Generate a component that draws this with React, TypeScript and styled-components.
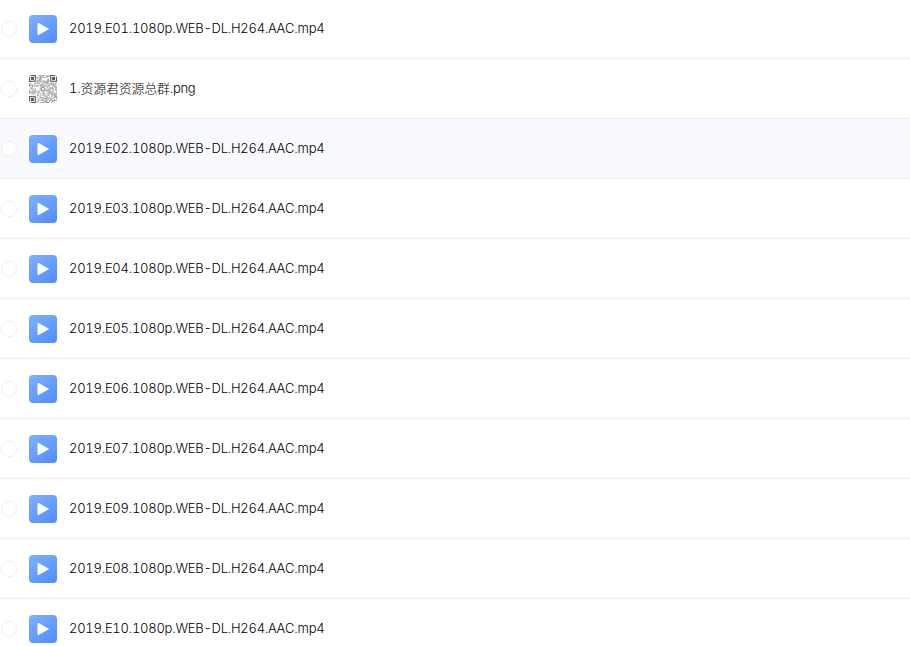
import React from "react";
import styled, { createGlobalStyle } from "styled-components";

const Global = createGlobalStyle`
  html, body { margin: 0; padding: 0; background: #fff; overflow: hidden; }
`;
const List = styled.ul`
  list-style: none; margin: -1px 0 0; padding: 0; width: 910px; height: 647px; overflow: hidden;
`;
const Row = styled.li<{ $active?: boolean }>`
  display: flex; align-items: center; box-sizing: border-box; height: 60px;
  border-bottom: 1px solid #eceef0;
  background: ${(p) => (p.$active ? "#f9faff" : "#fff")};
`;
const Radio = styled.span`
  box-sizing: border-box; width: 16px; height: 16px; margin-left: 1px; border-radius: 50%;
  border: 1px solid #eeeeee; background: #fff; flex: none;
`;
const Thumb = styled.span`
  display: flex; align-items: center; justify-content: center; flex: none;
  width: 28px; height: 28px; margin-left: 12px; border-radius: 4px; overflow: hidden;
`;
const VideoThumb = styled(Thumb)`
  background: linear-gradient(145deg, #7fb0ff 0%, #4f8dff 100%);
`;
const QrThumb = styled(Thumb)`
  filter: blur(0.25px);
`;
const Name = styled.span`
  margin-left: 12px; font: 300 13px/20px Inter, "Noto Sans CJK SC", sans-serif;
  font-kerning: none; font-variant-numeric: tabular-nums; letter-spacing: -0.25px; color: #000;
  position: relative; top: -0.5px;
`;

const Play = () => (
  <svg width="12" height="14" viewBox="0 0 12 14">
    <path d="M1 1.2 L11.4 7 L1 12.8 Z" fill="#fff" stroke="#fff" strokeWidth="1" strokeLinejoin="round" />
  </svg>
);

const QR = () => {
  const n = 29;
  const cells: React.ReactNode[] = [];
  const finder = (x: number, y: number) =>
    x >= 0 && y >= 0 && x < 7 && y < 7 && (x === 0 || y === 0 || x === 6 || y === 6 || (x > 1 && x < 5 && y > 1 && y < 5));
  for (let y = 0; y < n; y++) {
    for (let x = 0; x < n; x++) {
      const inF = (x < 8 && y < 8) || (x >= n - 8 && y < 8) || (x < 8 && y >= n - 8);
      let on: boolean;
      if (inF) on = finder(x, y) || finder(x - (n - 7), y) || finder(x, y - (n - 7));
      else {
        const h = Math.sin(x * 12.9898 + y * 78.233) * 43758.5453;
        on = h - Math.floor(h) > 0.55;
      }
      const c = Math.abs(x - 14) < 3 && Math.abs(y - 14) < 3;
      if (on && !c) cells.push(<rect key={`${x}-${y}`} x={x} y={y} width="1" height="1" fill={inF ? "#333" : "#888"} />);
    }
  }
  return (
    <svg width="28" height="28" viewBox="0 0 29 29">
      {cells}
      <circle cx="14.5" cy="14.5" r="2" fill="none" stroke="#777" strokeWidth="1" />
    </svg>
  );
};

const rows = ["E01", "png", "E02", "E03", "E04", "E05", "E06", "E07", "E09", "E08", "E10"];

export default function App() {
  return (
    <>
      <Global />
      <List>
        {rows.map((r, i) => (
          <Row key={r} $active={i === 2}>
            <Radio />
            {r === "png" ? (
              <QrThumb><QR /></QrThumb>
            ) : (
              <VideoThumb><Play /></VideoThumb>
            )}
            <Name>{r === "png" ? "1.资源君资源总群.png" : `2019.${r}.1080p.WEB-DL.H264.AAC.mp4`}</Name>
          </Row>
        ))}
      </List>
    </>
  );
}
